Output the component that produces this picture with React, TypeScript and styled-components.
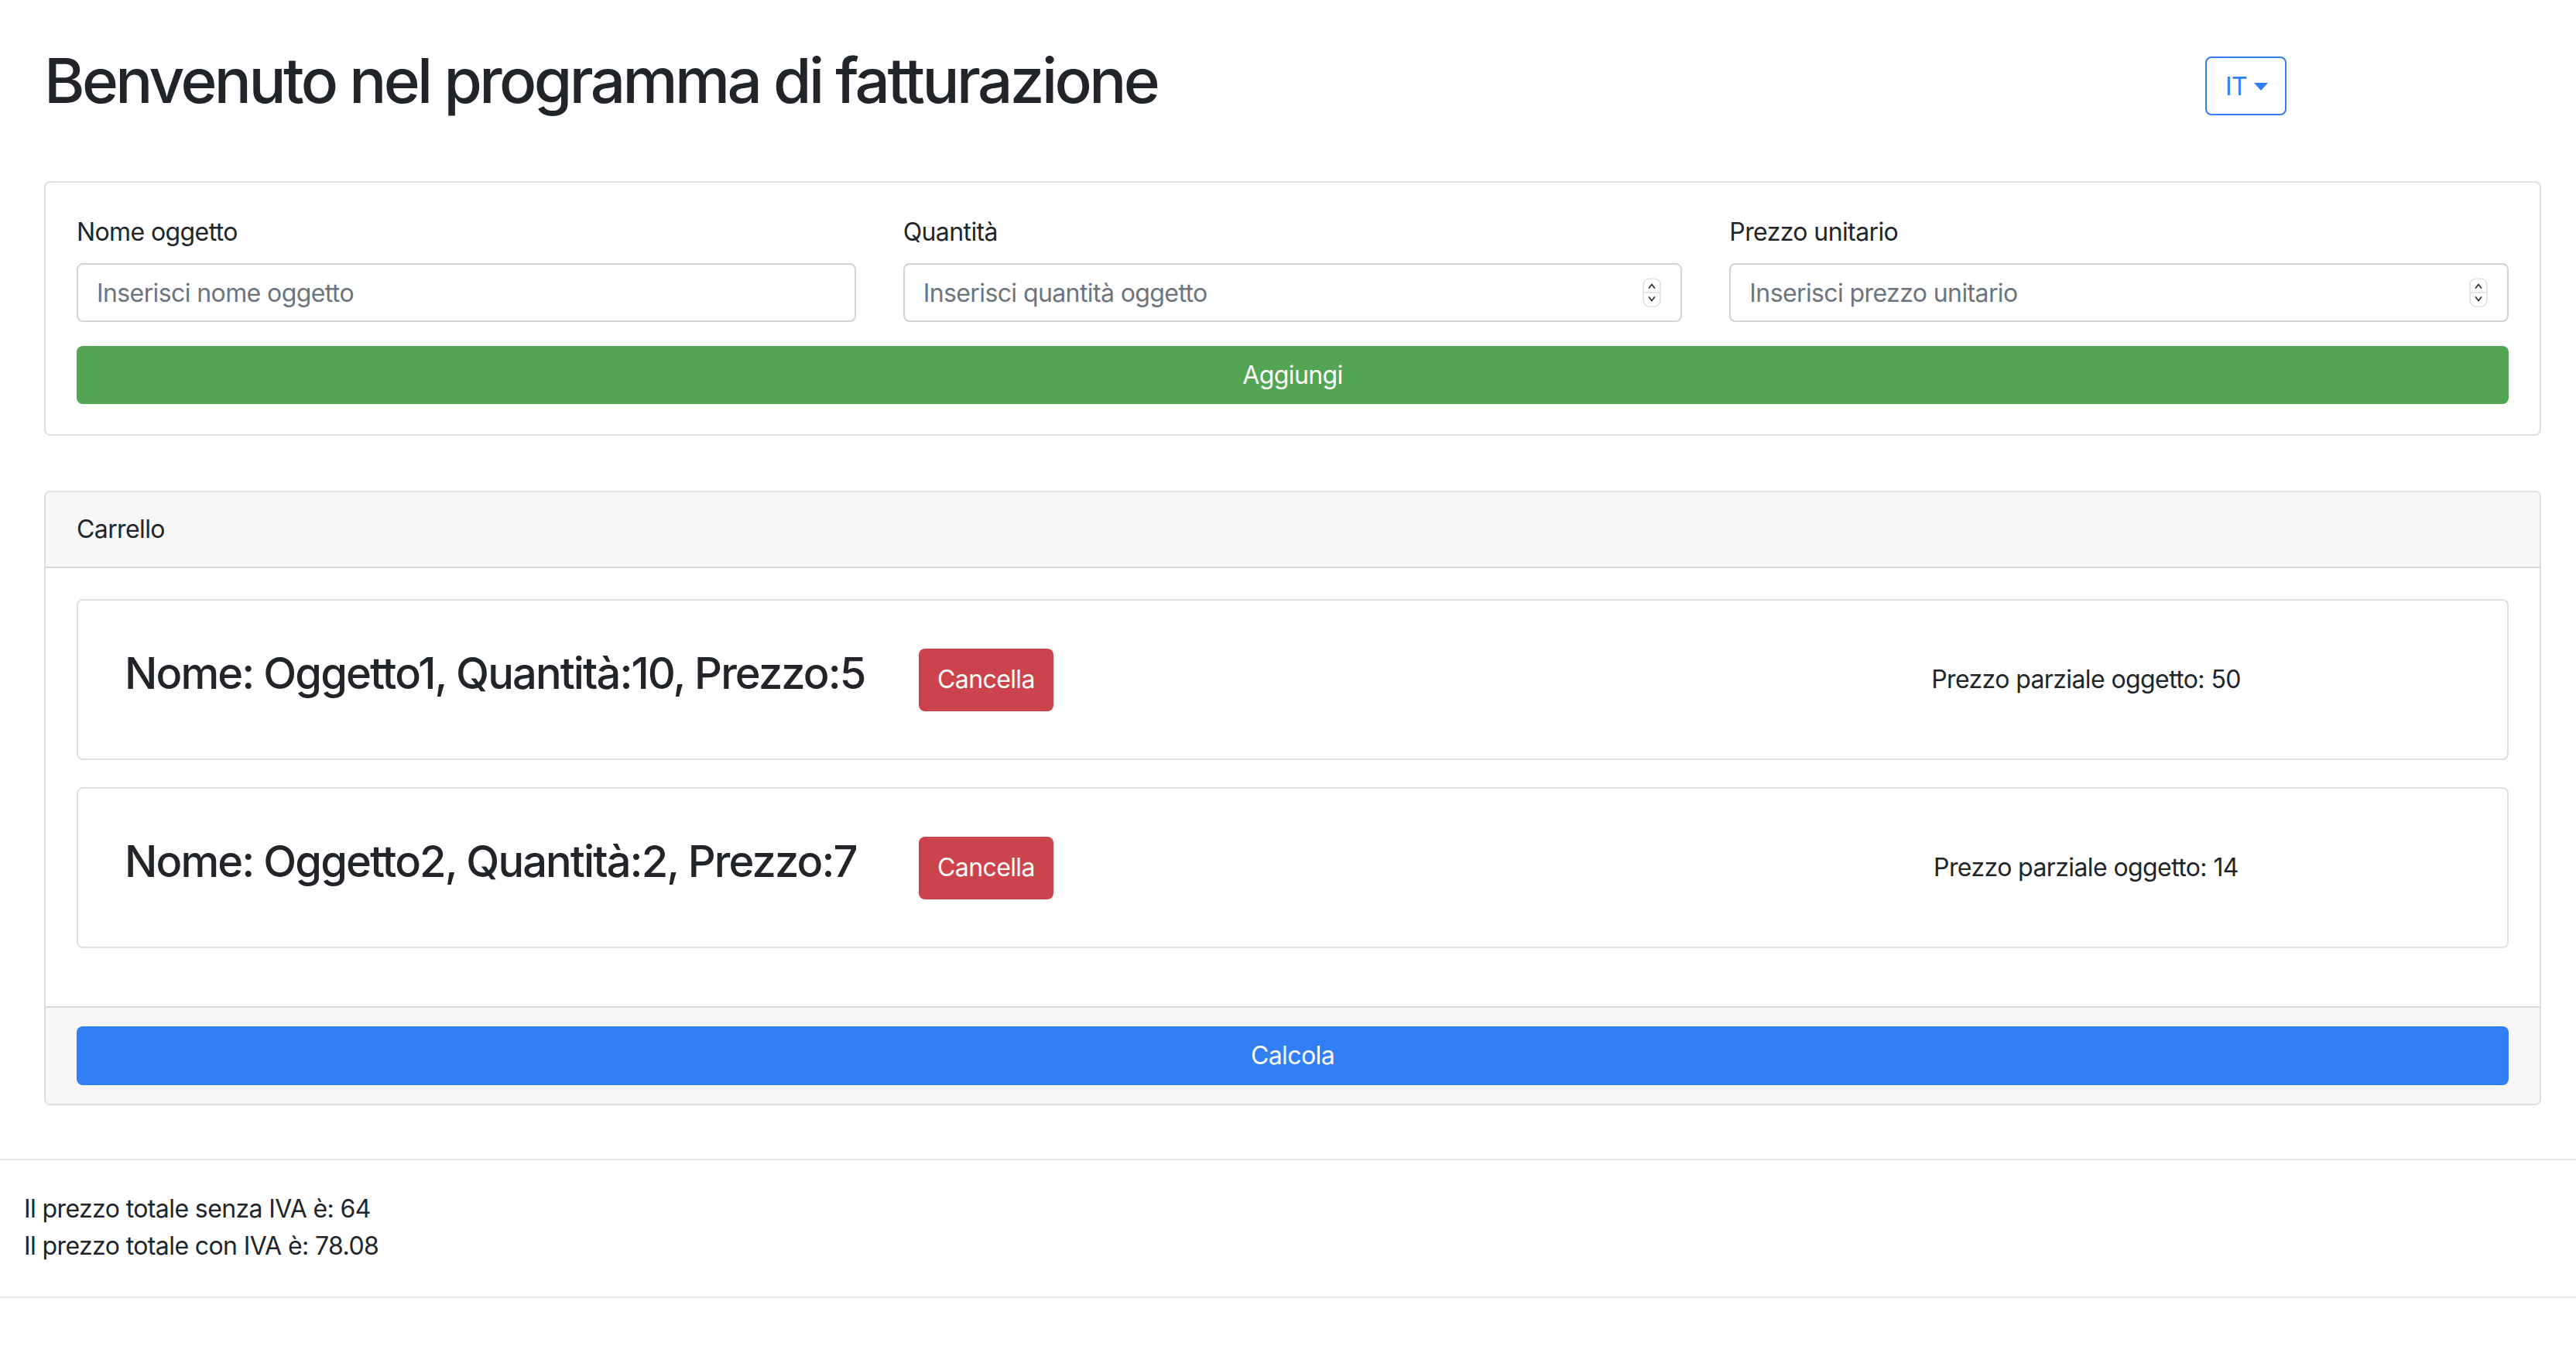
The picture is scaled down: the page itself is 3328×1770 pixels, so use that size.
import React from "react";
import styled, { createGlobalStyle } from "styled-components";

const GlobalStyle = createGlobalStyle`
  html, body {
    margin: 0;
    padding: 0;
    background: #ffffff;
  }
  body {
    font-family: Inter, "Noto Sans", "Liberation Sans", sans-serif;
    color: #212529;
    font-size: 32px;
    line-height: 48px;
    letter-spacing: -0.6px;
  }
  * { box-sizing: border-box; }
  button, input { letter-spacing: inherit; }
`;

const Page = styled.div`
  width: 100%;
`;

const Main = styled.main`
  padding: 56px 45px 0 57px;
`;

const Header = styled.header`
  display: grid;
  grid-template-columns: 1fr 434px;
  align-items: start;
`;

const Title = styled.h1`
  margin: 0;
  font-size: 80px;
  line-height: 96px;
  font-weight: 500;
  letter-spacing: -3.6px;
  color: #212529;
`;

const LangButton = styled.button`
  margin-top: 17px;
  justify-self: start;
  height: 76px;
  padding: 0 22px 0 24px;
  display: inline-flex;
  align-items: center;
  gap: 9px;
  border: 2px solid #317ef5;
  border-radius: 8px;
  background: #ffffff;
  color: #317ef5;
  font-family: inherit;
  font-size: 32px;
  font-weight: 400;
`;

const Caret = styled.span`
  width: 0;
  height: 0;
  margin-top: 2px;
  border-top: 10px solid #317ef5;
  border-left: 9px solid transparent;
  border-right: 9px solid transparent;
`;

const Card = styled.section<{ $gap: number }>`
  margin-top: ${(p) => p.$gap}px;
  border: 2px solid rgba(0, 0, 0, 0.125);
  border-radius: 8px;
  background: #ffffff;
  overflow: hidden;
`;

const FormBody = styled.div`
  padding: 40px 40px 39px;
`;

const FieldsRow = styled.div`
  display: grid;
  grid-template-columns: repeat(3, 1fr);
  column-gap: 61px;
`;

const Field = styled.div`
  display: flex;
  flex-direction: column;
`;

const Label = styled.label`
  display: block;
  font-size: 32px;
  line-height: 48px;
  margin-bottom: 16px;
`;

const InputWrap = styled.div`
  position: relative;
`;

const Input = styled.input`
  display: block;
  width: 100%;
  height: 76px;
  padding: 0 24px;
  border: 2px solid #ced4da;
  border-radius: 8px;
  font-family: inherit;
  font-size: 32px;
  color: #495057;
  background: #ffffff;
  outline: none;
  &::placeholder {
    color: #6c757d;
    opacity: 1;
  }
`;

const Spinner = styled.svg`
  position: absolute;
  right: 27px;
  top: 19px;
  width: 24px;
  height: 38px;
`;

const SolidButton = styled.button<{ $bg: string; $h: number }>`
  display: block;
  width: 100%;
  height: ${(p) => p.$h}px;
  border: none;
  border-radius: 8px;
  background: ${(p) => p.$bg};
  color: #ffffff;
  font-family: inherit;
  font-size: 32px;
  line-height: 48px;
  text-align: center;
`;

const AddButton = styled(SolidButton)`
  margin-top: 31px;
`;

const CardHeader = styled.div`
  padding: 24px 40px;
  background: #f7f7f7;
  border-bottom: 2px solid rgba(0, 0, 0, 0.125);
  font-size: 32px;
  line-height: 48px;
`;

const CartBody = styled.div`
  padding: 40px 40px 75px;
  display: flex;
  flex-direction: column;
  gap: 35px;
`;

const ItemCard = styled.article`
  height: 208px;
  border: 2px solid rgba(0, 0, 0, 0.125);
  border-radius: 8px;
  display: grid;
  grid-template-columns: 1026px 1fr 1088px;
  align-items: center;
  padding-left: 60px;
`;

const ItemTitle = styled.h3`
  margin: 0 0 16px;
  font-size: 56px;
  line-height: 67px;
  font-weight: 500;
  letter-spacing: -1.9px;
  white-space: nowrap;
`;

const DeleteButton = styled.button`
  justify-self: start;
  height: 81px;
  padding: 0 24px;
  border: none;
  border-radius: 8px;
  background: #cc444b;
  color: #ffffff;
  font-family: inherit;
  font-size: 32px;
  line-height: 48px;
`;

const Partial = styled.p`
  margin: 0;
  text-align: center;
  font-size: 32px;
  line-height: 48px;
`;

const CardFooter = styled.div`
  padding: 24px 40px;
  background: #f7f7f7;
  border-top: 2px solid rgba(0, 0, 0, 0.125);
`;

const Totals = styled.div`
  margin-top: 69px;
  padding: 39px 31px 41px;
  border-top: 2px solid rgba(0, 0, 0, 0.1);
  border-bottom: 2px solid rgba(0, 0, 0, 0.1);
`;

const TotalLine = styled.p`
  margin: 0;
  font-size: 32px;
  line-height: 48px;
`;

const SpinIcon = () => (
  <Spinner viewBox="0 0 24 38" aria-hidden>
    <rect x="1" y="1" width="22" height="36" rx="8" fill="#ffffff" stroke="#d5d5d5" strokeWidth="1.2" />
    <line x1="1.5" y1="19" x2="22.5" y2="19" stroke="#d5d5d5" strokeWidth="1.2" />
    <path d="M8.5 13 L12 8.5 L15.5 13" fill="none" stroke="#333" strokeWidth="1.8" strokeLinecap="round" strokeLinejoin="round" />
    <path d="M8.5 25 L12 29.5 L15.5 25" fill="none" stroke="#333" strokeWidth="1.8" strokeLinecap="round" strokeLinejoin="round" />
  </Spinner>
);

const fields = [
  { label: "Nome oggetto", placeholder: "Inserisci nome oggetto", spin: false },
  { label: "Quantità", placeholder: "Inserisci quantità oggetto", spin: true },
  { label: "Prezzo unitario", placeholder: "Inserisci prezzo unitario", spin: true },
];

const items = [
  { name: "Oggetto1", qty: 10, price: 5 },
  { name: "Oggetto2", qty: 2, price: 7 },
];

export default function App() {
  const total = items.reduce((s, i) => s + i.qty * i.price, 0);
  return (
    <Page>
      <GlobalStyle />
      <Main>
        <Header>
          <Title>Benvenuto nel programma di fatturazione</Title>
          <LangButton type="button">
            IT
            <Caret />
          </LangButton>
        </Header>

        <Card $gap={82}>
          <FormBody>
            <FieldsRow>
              {fields.map((f) => (
                <Field key={f.label}>
                  <Label>{f.label}</Label>
                  <InputWrap>
                    <Input type="text" placeholder={f.placeholder} />
                    {f.spin && <SpinIcon />}
                  </InputWrap>
                </Field>
              ))}
            </FieldsRow>
            <AddButton type="button" $bg="#52a552" $h={75}>
              Aggiungi
            </AddButton>
          </FormBody>
        </Card>

        <Card $gap={71}>
          <CardHeader>Carrello</CardHeader>
          <CartBody>
            {items.map((it) => (
              <ItemCard key={it.name}>
                <ItemTitle>
                  Nome: {it.name}, Quantità:{it.qty}, Prezzo:{it.price}
                </ItemTitle>
                <DeleteButton type="button">Cancella</DeleteButton>
                <Partial>Prezzo parziale oggetto: {it.qty * it.price}</Partial>
              </ItemCard>
            ))}
          </CartBody>
          <CardFooter>
            <SolidButton type="button" $bg="#317ef5" $h={76}>
              Calcola
            </SolidButton>
          </CardFooter>
        </Card>
      </Main>

      <Totals>
        <TotalLine>Il prezzo totale senza IVA è: {total}</TotalLine>
        <TotalLine>Il prezzo totale con IVA è: {(total * 1.22).toFixed(2)}</TotalLine>
      </Totals>
    </Page>
  );
}
